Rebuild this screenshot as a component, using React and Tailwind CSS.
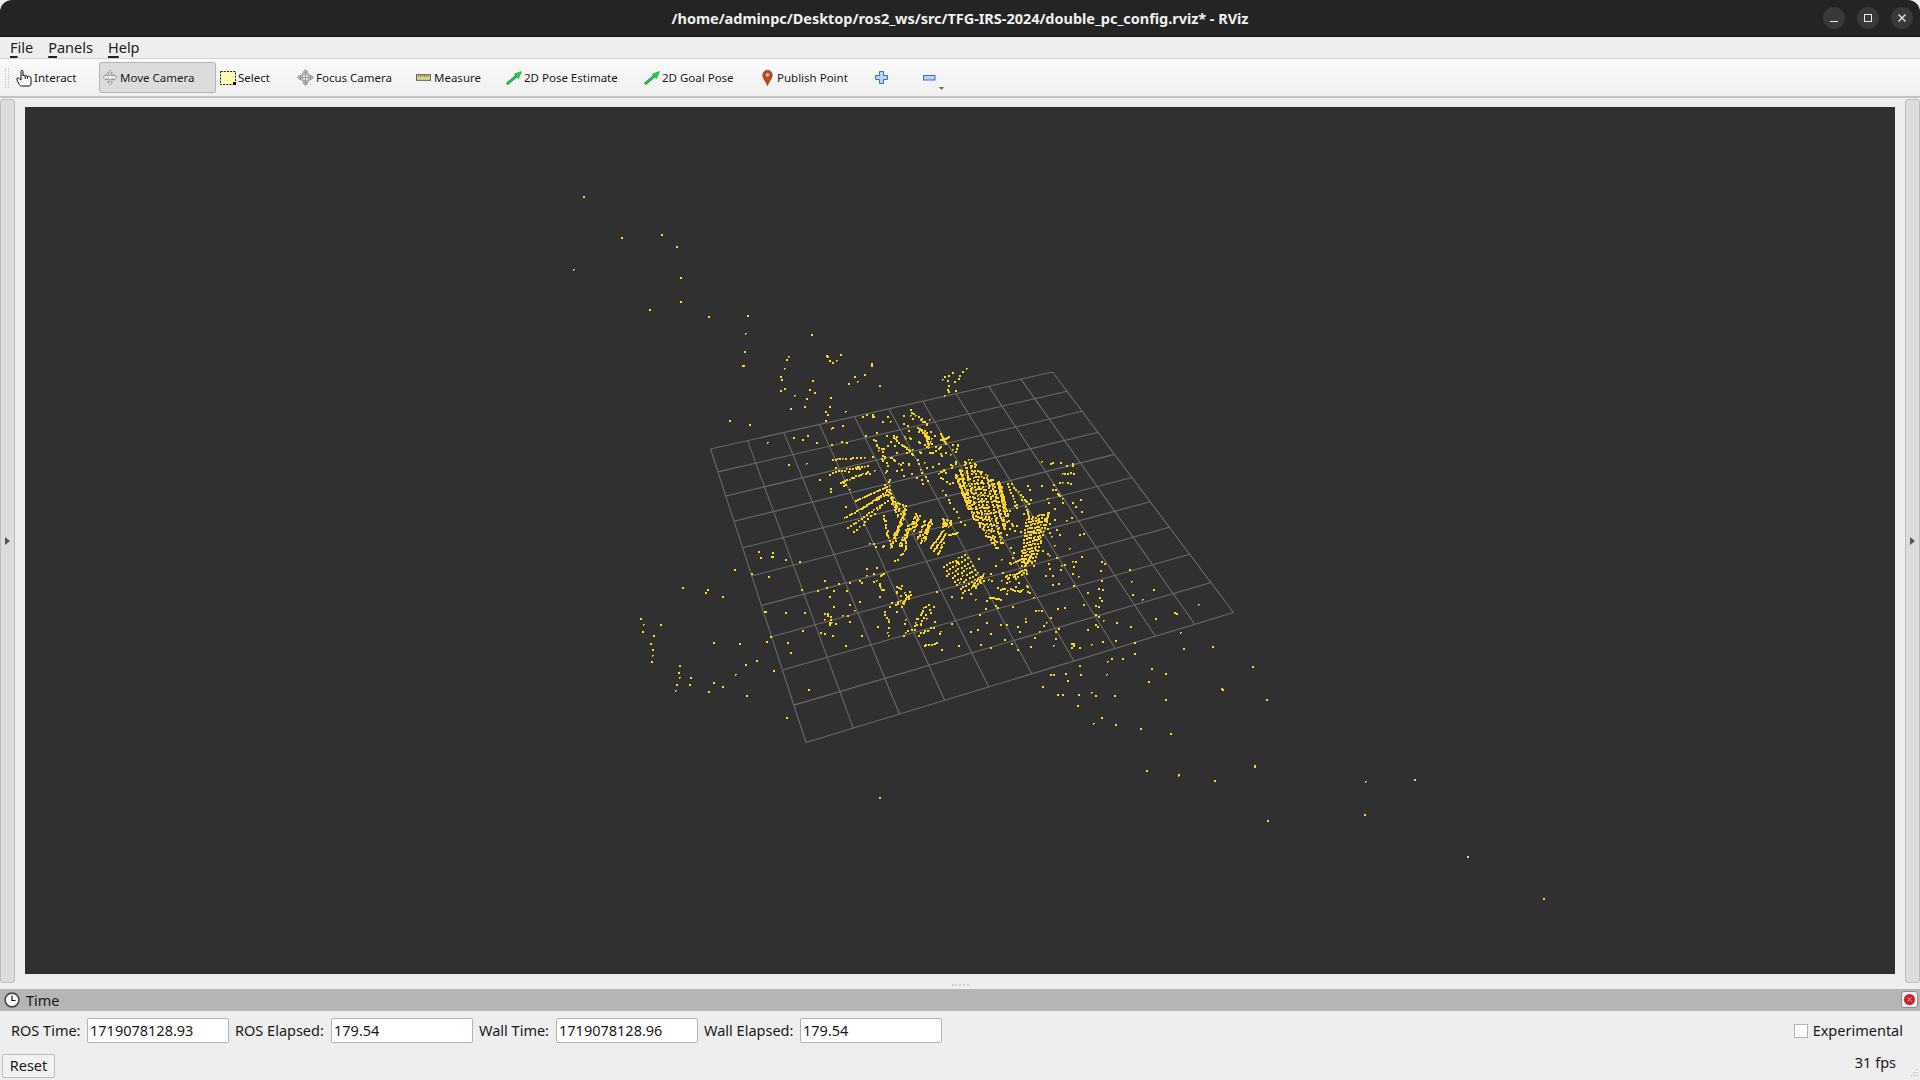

import React from "react";

const FONT = "font-['Noto_Sans','Open_Sans',sans-serif]";
const VX = 25, VY = 107;

function homography(p) {
  const [[x0,y0],[x1,y1],[x2,y2],[x3,y3]] = p;
  const dx1=x1-x2, dx2=x3-x2, sx=x0-x1+x2-x3;
  const dy1=y1-y2, dy2=y3-y2, sy=y0-y1+y2-y3;
  const d=dx1*dy2-dx2*dy1;
  const g=(sx*dy2-dx2*sy)/d, h=(dx1*sy-sx*dy1)/d;
  const a=x1-x0+g*x1, b=x3-x0+h*x3, c=x0;
  const e=y1-y0+g*y1, f=y3-y0+h*y3, i=y0;
  return (u,v)=>{const w=g*u+h*v+1;return [(a*u+b*v+c)/w,(e*u+f*v+i)/w];};
}
const H = homography([[710.5,449],[1052.5,372],[1233.5,612.5],[806,742.5]]);
function gridPath(){
  let s="";
  for(let k=0;k<=10;k++){
    const a=H(k/10,0),b=H(k/10,1),c=H(0,k/10),d=H(1,k/10);
    s+=`M${a[0]-VX} ${a[1]-VY}L${b[0]-VX} ${b[1]-VY}M${c[0]-VX} ${c[1]-VY}L${d[0]-VX} ${d[1]-VY}`;
  }
  return s;
}

function buildPoints(){
  let seed=12345;
  const R=()=>{seed=(seed*16807)%2147483647;return seed/2147483647;};
  const pts=[];
  const add=(x,y)=>pts.push([Math.round(x),Math.round(y)]);
  const z7=(x,y)=>[700+x/3,350+y/3];
  const line=(x0,y0,x1,y1,n,j=0.6)=>{
    for(let i=0;i<n;i++){
      const t=n>1?i/(n-1):0;
      const [x,y]=z7(x0+(x1-x0)*t,y0+(y1-y0)*t);
      add(x+(R()-0.5)*j,y+(R()-0.5)*j);
    }
  };
  const cloud=(x0,y0,x1,y1,n)=>{
    for(let i=0;i<n;i++){const [x,y]=z7(x0+(x1-x0)*R(),y0+(y1-y0)*R());add(x,y);}
  };
  // A - big right block, a diamond of parallel strips
  const A=[[765,375,800,470],[778,358,820,505],[790,335,838,530],[805,325,855,555],[820,340,872,575],[838,362,885,590],[855,372,900,575],[870,385,908,530],[890,395,915,495]];
  A.forEach(a=>{line(a[0],a[1],a[2],a[3],26,1);});
  A.forEach(a=>{line(a[0]+6,a[1]+2,a[2]+6,a[3]+2,14,1);});
  line(725,420,790,525,9,2);
  line(895,392,915,460,10);line(920,400,950,470,9);line(940,410,985,460,8);line(905,500,945,530,6,3);
  // B - left fan
  line(565,405,465,450,16);line(565,418,480,475,15);line(556,430,432,502,18);line(560,450,442,530,16);line(540,470,458,545,10,2);
  line(395,327,490,320,10,1);line(397,365,500,345,13,1);line(418,395,500,365,13,1);
  // C - dense strips
  line(556,405,598,485,20,2);line(565,430,590,495,14,2);line(575,450,612,470,6,2);
  line(548,495,570,585,16,2);line(570,585,615,470,30,3);line(580,565,610,490,24,3);line(600,585,625,525,20,3);line(612,595,622,540,10,2);
  line(630,535,648,490,12,2);line(640,540,655,495,11,2);line(660,575,690,505,14,2);line(670,570,692,515,12,2);line(650,565,672,510,12,2);
  line(505,585,590,590,8,5);line(582,630,612,600,5,3);
  // D
  line(690,590,728,540,12);line(700,600,735,548,12);line(712,610,728,575,7);
  for(let i=0;i<20;i++){add(700+738/3+(R()-.5)*9,350+517/3+(R()-.5)*8);}
  line(745,552,772,546,9);
  // E lattice
  for(let r=0;r<8;r++){line(730+r*8,648+r*11,792+r*8,612+r*11,8,1);}
  line(825,712,850,668,8);line(815,705,835,680,6);
  // F right column
  for(let r=0;r<14;r++){line(962+r*1.2,636-r*10,1000+r*3.5,630-r*11,7+Math.floor(r/3),1.2);}
  line(975,640,995,610,7);line(975,470,985,500,6);line(1040,480,1050,560,7,4);
  // G upper lattice
  for(let r=0;r<5;r++){line(650+r*7,230+r*4,692-r*2,265+r*7,6);}
  line(720,268,745,258,8);line(720,250,735,280,6);
  line(628,180,680,222,9,2);line(610,285,635,310,9);line(540,295,560,345,6,2);
  line(570,320,600,340,5,2);line(520,265,535,300,5,2);line(575,255,605,285,7,2);
  for(let r=0;r<8;r++){line(520+r*27,205+r*7,555+r*25,360+r*3,5,6);}
  line(728,85,790,60,7,6);line(735,110,765,85,5,6);line(730,130,762,120,3,4);
  // H
  line(915,680,975,655,11,2);line(895,712,985,725,13,3);line(868,740,900,746,7);
  line(925,640,965,625,7,2);
  // I lower
  line(520,690,552,670,5,5);line(535,700,550,718,5,3);
  line(590,725,630,738,8,5);line(600,770,630,725,10,2);line(582,760,605,750,5,3);line(590,710,606,708,4,3);
  line(642,815,680,760,9,3);line(660,820,695,770,8,3);line(610,855,660,815,8,3);line(655,850,700,830,8,3);line(670,885,708,878,6,1);
  line(550,785,565,815,5,2);line(380,790,400,820,6,3);
  // right arcs on the grid
  line(1055,335,1115,345,4,4);line(1085,370,1118,368,5,2);line(1075,395,1110,398,4,2);line(1060,420,1085,440,4,3);
  // scatter
  cloud(370,180,720,400,50);
  cloud(640,280,780,400,40);
  cloud(900,400,1150,720,85);
  cloud(720,620,1000,760,20);
  cloud(360,620,620,860,35);
  cloud(690,720,1130,900,50);
  cloud(380,380,460,420,6);

  const list=(ox,oy,arr)=>arr.forEach(([x,y])=>add(ox+x/3,oy+y/3));
  list(700,350,[[131,3],[264,17],[380,17],[420,13],[388,30],[396,36],[128,44],[251,54],[513,44],[491,73],[461,78],[242,86],[336,89],[471,93],[444,99],[536,104],[239,120],[328,118],[341,126],[281,134],[318,143],[389,140],[270,173],[311,167],[388,169],[436,184],[380,191],[88,210],[146,222],[375,210],[425,225],[202,275],[278,260],[321,254],[305,268],[348,277],[264,341],[318,338],[357,386],[389,422],[434,467],[173,602],[214,617],[255,627],[297,633],[101,656],[152,668],[204,677],[304,716],[351,720],[398,719],[14,725],[66,738],[193,783],[254,786],[312,785],[38,875],[116,878],[197,872],[210,858],[262,875],[372,806],[386,815],[305,840],[359,846],[435,884],[1055,335],[1023,333],[1115,345]]);
  list(620,540,[[413,32],[455,47],[495,56],[536,62],[341,86],[392,98],[443,107],[185,140],[254,155],[306,167],[543,146],[592,150],[434,212],[494,215],[552,215],[59,233],[69,252],[120,252],[66,274],[98,284],[89,308],[96,326],[95,344],[92,363],[278,305],[356,308],[449,287],[437,302],[502,305],[510,335],[407,359],[458,389],[178,374],[173,395],[177,410],[211,410],[168,433],[206,431],[278,425],[305,438],[164,449],[263,452],[377,465],[563,447],[497,530],[545,270]]);
  list(1030,560,[[125,2],[212,2],[221,8],[296,26],[210,30],[213,59],[302,62],[203,84],[215,86],[368,87],[170,95],[305,103],[335,116],[214,120],[207,112],[204,137],[159,131],[194,135],[503,131],[433,155],[438,158],[375,174],[194,161],[204,167],[218,180],[257,187],[299,197],[200,197],[194,192],[170,206],[449,215],[254,239],[215,242],[313,245],[458,263],[545,257],[182,252],[146,260],[122,250],[275,293],[242,294],[312,279],[230,302],[146,314],[362,323],[405,338],[104,338],[149,341],[227,341],[60,341],[68,341],[353,362],[110,361],[35,377],[665,317],[575,386],[707,417],[80,402],[95,401],[143,402],[182,395],[194,404],[251,405],[404,417],[140,434],[212,471],[188,488],[254,491],[329,503],[419,518],[671,617],[347,630],[443,644],[551,659]]);
  [[583,196],[621,237],[661,234],[676,246],[573,269],[680,277],[680,301],[649,309],[708,316],[747,315],[745,333],[744,351],[742,365],[811,334],[786,359],[826,355],[836,360],[871,363],[784,388],[780,376],
   [1252,666],[1266,699],[1221,688],[1146,770],[1178,774],[1214,780],[1254,765],[1267,820],[1365,781],[1414,779],[1364,814],[1467,856],[1543,898],[879,797],
   [735,674],[707,589],[745,664],[760,557],[772,552]
  ].forEach(([x,y])=>add(x,y));
  return pts;
}

function pointsPaths(){
  const pts=buildPoints();
  let big="",small="";
  pts.forEach(([x,y],i)=>{
    const X=x-VX,Y=y-VY;
    if(i%6===0) small+=`M${X} ${Y}h2v1h-1v1h-1z`;
    else big+=`M${X} ${Y}h2v2h-2z`;
  });
  return {big,small};
}

function Viewport(){
  const {big,small}=pointsPaths();
  return (
    <svg width="1870" height="867" className="block">
      <path d={gridPath()} stroke="#6a6a6a" strokeWidth="1.1" fill="none"/>
      <path d={small} fill="#e3c322" shapeRendering="crispEdges"/>
      <path d={big} fill="#fbd726" shapeRendering="crispEdges"/>
    </svg>
  );
}

const HandIcon=()=>(
  <svg className="shrink-0" width="16" height="18" viewBox="0 0 16 18" fill="none" stroke="#111" strokeWidth="1">
    <path d="M1 9.500 C1 8.500 2.500 8.500 3.500 10 L5 11 V2.500 C5 .8 7 .8 7 2.500 V7 C7 5.800 9.200 5.800 9.200 7.500 C9.200 6.300 11.400 6.300 11.400 8 C11.400 7 15 7 15 9 V15 C15 16.500 14 17 13 17 H5.500 C4.500 17 3.500 16 3 15 L1 11 Z" fill="#fff"/>
    <path d="M9.200 7.500V10M11.400 8V10" />
  </svg>
);
const MoveIcon=()=>(
  <svg className="shrink-0" width="16" height="17" viewBox="0 0 17 17" fill="none" stroke="#666" strokeWidth="1">
    <path d="M8.500 .8L11 3.500H9.500V6.500H12.500V5L15.800 8.500L12.500 11.500V10H9.500V13H11L8.500 16.200L6 13H7.500V10H4.500V11.500L1.200 8.500L4.500 5V6.500H7.500V3.500H6Z" fill="#eee" strokeDasharray="1.400 .8"/>
  </svg>
);
const SelectIcon=()=>(
  <svg className="shrink-0" width="16" height="14" viewBox="0 0 16 14">
    <rect x=".5" y=".5" width="15" height="13" fill="#fdf8b5" stroke="#222" strokeDasharray="2 1.200"/>
    <rect x="13" y="11" width="3" height="3" fill="#111"/>
  </svg>
);
const FocusIcon=()=>(
  <svg className="shrink-0" width="17" height="17" viewBox="0 0 18 18" fill="none" stroke="#8a8a8a" strokeWidth="1">
    <path d="M9 .5L11.500 3.500H6.500ZM9 17.500L6.500 14.500H11.500ZM.5 9L3.500 6.500V11.500ZM17.500 9L14.500 11.500V6.500Z" fill="#ccc"/>
    <circle cx="9" cy="9" r="5" fill="#eee"/>
    <path d="M9 4V14M4 9H14M6 6H12V12H6Z" strokeWidth=".8"/>
  </svg>
);
const RulerIcon=()=>(
  <svg className="shrink-0" width="15" height="7" viewBox="0 0 16 7">
    <rect x=".5" y=".5" width="15" height="6" fill="#e3d48d" stroke="#555"/>
    <path d="M3 1v2M5 1v2M7 1v2M9 1v2M11 1v2M13 1v2" stroke="#6d6430" strokeWidth=".8"/>
  </svg>
);
const GreenArrow=()=>(
  <svg className="shrink-0" width="16" height="14" viewBox="0 0 16 14">
    <path d="M1 13L11 4.500" stroke="#0a6d1c" strokeWidth="2.600"/>
    <path d="M1.500 12.500L11 4.500" stroke="#1fe84a" strokeWidth="1.400"/>
    <path d="M15.500 .5L8.500 3L12.500 7.500Z" fill="#18dd42" stroke="#0a7a20" strokeWidth=".5"/>
  </svg>
);
const PinIcon=()=>(
  <svg className="shrink-0" width="11" height="18" viewBox="0 0 12 18">
    <path d="M6 17.500C4.500 13 .8 10 .8 5.800C.8 2.800 3 .5 6 .5C9 .5 11.200 2.800 11.200 5.800C11.200 10 7.500 13 6 17.500Z" fill="#c2461f" stroke="#7a4a2a" strokeWidth=".7"/>
    <circle cx="6" cy="5.500" r="2" fill="#f1b79d"/>
  </svg>
);
const PlusIcon=()=>(
  <svg className="shrink-0" width="13" height="13" viewBox="0 0 13 13">
    <path d="M4.500 .5H8.500V4.500H12.500V8.500H8.500V12.500H4.500V8.500H.5V4.500H4.500Z" fill="#b9d3f2" stroke="#3f6fb3"/>
  </svg>
);
const MinusIcon=()=>(
  <svg className="shrink-0" width="13" height="6" viewBox="0 0 13 6">
    <rect x=".5" y=".5" width="11.500" height="4.500" fill="#b9d3f2" stroke="#3f6fb3"/>
  </svg>
);
const ClockIcon=()=>(
  <svg className="shrink-0" width="16" height="16" viewBox="0 0 16 16">
    <circle cx="8" cy="8" r="6.900" fill="#fff" stroke="#4a4a4a" strokeWidth="1.600"/>
    <path d="M8 3.500V8.500H11.500" fill="none" stroke="#111" strokeWidth="1.200"/>
  </svg>
);

function Tool({icon,label,w,pl="pl-0",gap="gap-[2px]",active}){
  return (
    <div className={`flex h-[31px] shrink-0 items-center ${pl} ${gap} rounded-[3px] text-[11.5px] text-[#1a1a1a] ${w} ${active?"outline outline-1 -outline-offset-1 outline-[#b4b4b4] bg-[#dcdcdc]":""}`}>
      {icon}<span className="whitespace-nowrap pt-[1px]">{label}</span>
    </div>
  );
}

function Field({label,value,labelW}){
  return (
    <div className="flex items-center">
      <span className={`${labelW} whitespace-nowrap pt-[1px] text-[14.5px] text-[#1a1a1a]`}>{label}</span>
      <div className="flex h-[25px] w-[142px] items-center rounded-[2px] border border-[#b3b3b3] bg-white pl-[2px] pt-[1px] text-[14.5px] text-[#1a1a1a]">{value}</div>
    </div>
  );
}

function SideHandle(){
  return <div className="flex w-[15px] items-center justify-center rounded-[3px] border border-[#bdbdbd] bg-[#dcdcdc]">
    <svg width="5" height="8" viewBox="0 0 5 8"><path d="M0 0L5 4L0 8Z" fill="#555"/></svg>
  </div>;
}

const Mn=({k,rest})=>(<span><span className="underline decoration-[1.5px] underline-offset-[3px]">{k}</span>{rest}</span>);

export default function App(){
  return (
    <div className={`${FONT} flex h-[1080px] w-[1920px] flex-col overflow-hidden bg-[#eeeeee]`}>
      {/* title bar */}
      <div className="relative flex h-[37px] shrink-0 items-center justify-center rounded-t-[12px] border-b border-[#151515] bg-[#242424] pt-[1px] text-[14.5px] font-bold text-[#f0f0f0]">
        <span className="tracking-[-0.04px]">/home/adminpc/Desktop/ros2_ws/src/TFG-IRS-2024/double_pc_config.rviz* - RViz</span>
        <div className="absolute top-[7px] right-[7px] flex gap-[12px]">
          <div className="flex h-[22px] w-[22px] items-center justify-center rounded-full bg-[#393939]">
            <svg width="10" height="10" viewBox="0 0 10 10"><path d="M1 8.500H9" stroke="#eee" strokeWidth="1"/></svg>
          </div>
          <div className="flex h-[22px] w-[22px] items-center justify-center rounded-full bg-[#393939]">
            <svg width="10" height="10" viewBox="0 0 10 10"><rect x="1.500" y="1.500" width="7" height="7" fill="none" stroke="#eee"/></svg>
          </div>
          <div className="flex h-[22px] w-[22px] items-center justify-center rounded-full bg-[#393939]">
            <svg width="10" height="10" viewBox="0 0 10 10"><path d="M1.500 1.500L8.500 8.500M8.500 1.500L1.500 8.500" stroke="#eee" strokeWidth="1.200"/></svg>
          </div>
        </div>
      </div>
      {/* menu bar */}
      <div className="flex h-[22px] shrink-0 items-center gap-[15px] border-b border-[#d5d5d5] bg-[#eeeeee] pl-[10px] text-[14.5px] text-[#222]">
        <Mn k="F" rest="ile"/>
        <Mn k="P" rest="anels"/>
        <Mn k="H" rest="elp"/>
      </div>
      {/* toolbar */}
      <div className="flex h-[39px] shrink-0 items-center border-b-2 border-[#c4c4c4] bg-gradient-to-b from-[#fafafa] to-[#f0f0f0] pl-[5px]">
        <div className="mr-[7px] h-[20px] w-[4px] shrink-0 border-x border-dotted border-[#c4c4c4]"/>
        <Tool icon={<HandIcon/>} label="Interact" w="w-[83px]"/>
        <Tool icon={<MoveIcon/>} label="Move Camera" w="w-[117px]" pl="pl-[3px]" active/>
        <Tool icon={<SelectIcon/>} label="Select" w="w-[81px]" pl="pl-[4px]"/>
        <Tool icon={<FocusIcon/>} label="Focus Camera" w="w-[119px]"/>
        <Tool icon={<RulerIcon/>} label="Measure" w="w-[90px]" gap="gap-[3px]"/>
        <Tool icon={<GreenArrow/>} label="2D Pose Estimate" w="w-[138px]"/>
        <Tool icon={<GreenArrow/>} label="2D Goal Pose" w="w-[118px]"/>
        <Tool icon={<PinIcon/>} label="Publish Point" w="w-[113px]" gap="gap-[4px]"/>
        <PlusIcon/>
        <div className="ml-[35px]"><MinusIcon/></div>
        <svg className="ml-[3px] mt-[22px] shrink-0" width="5" height="3" viewBox="0 0 5 3"><path d="M0 0H5L2.500 3Z" fill="#666"/></svg>
      </div>
      {/* central area */}
      <div className="flex h-[891px] shrink-0 pt-[1px] pb-[6px]">
        <SideHandle/>
        <div className="flex flex-1 flex-col px-[10px] pt-[8px]">
          <div className="h-[867px] shrink-0 bg-[#303030]"><Viewport/></div>
          <div className="flex flex-1 justify-center pt-[10px]">
            <div className="h-0 w-[17px] border-t-2 border-dotted border-[#cfcfcf]"/>
          </div>
        </div>
        <SideHandle/>
      </div>
      {/* time panel */}
      <div className="relative flex h-[22px] shrink-0 items-center bg-[#b5b5b5] pl-[4px] text-[14.5px] text-[#1a1a1a]">
        <ClockIcon/><span className="ml-[6px] pt-[1px]">Time</span>
        <div className="absolute right-[2px] top-[2px] flex h-[17px] w-[17px] items-center justify-center rounded-[3px] border border-[#8f8f8f] bg-[#eeeeee]">
          <div className="flex h-[11px] w-[11px] items-center justify-center rounded-full bg-[#cc1f2b]">
            <svg width="5" height="5" viewBox="0 0 5 5"><path d="M.5 .5L4.500 4.500M4.500 .5L.5 4.500" stroke="#f3c7c7" strokeWidth="1"/></svg>
          </div>
        </div>
      </div>
      <div className="flex h-[39px] shrink-0 items-center pl-[11px] pr-[17px]">
        <Field label="ROS Time:" value="1719078128.93" labelW="w-[76px]"/>
        <div className="ml-[6px]"><Field label="ROS Elapsed:" value="179.54" labelW="w-[96px]"/></div>
        <div className="ml-[6px]"><Field label="Wall Time:" value="1719078128.96" labelW="w-[77px]"/></div>
        <div className="ml-[6px]"><Field label="Wall Elapsed:" value="179.54" labelW="w-[96px]"/></div>
        <div className="ml-auto flex items-center gap-[5px] text-[14.5px] text-[#1a1a1a]">
          <div className="h-[14px] w-[14px] border border-[#b3b3b3] bg-white"/>
          <span>Experimental</span>
        </div>
      </div>
      <div className="relative flex flex-1 items-center justify-between pt-[2px] pl-[2px] pr-[24px]">
        <div className="flex h-[24px] w-[53px] items-center justify-center rounded-[2px] border border-[#bdbdbd] bg-[#f2f2f2] text-[14.5px] text-[#1a1a1a]">Reset</div>
        <span className="mb-[6px] text-[14.5px] text-[#1a1a1a]">31 fps</span>
        <svg className="absolute right-[1px] bottom-[1px]" width="11" height="11" viewBox="0 0 11 11"><path d="M8 1h2v1h-2zM8 4h2v1h-2zM8 7h2v1h-2zM5 4h2v1h-2zM5 7h2v1h-2zM2 7h2v1h-2z" fill="#c4c4c4"/></svg>
      </div>
    </div>
  );
}
